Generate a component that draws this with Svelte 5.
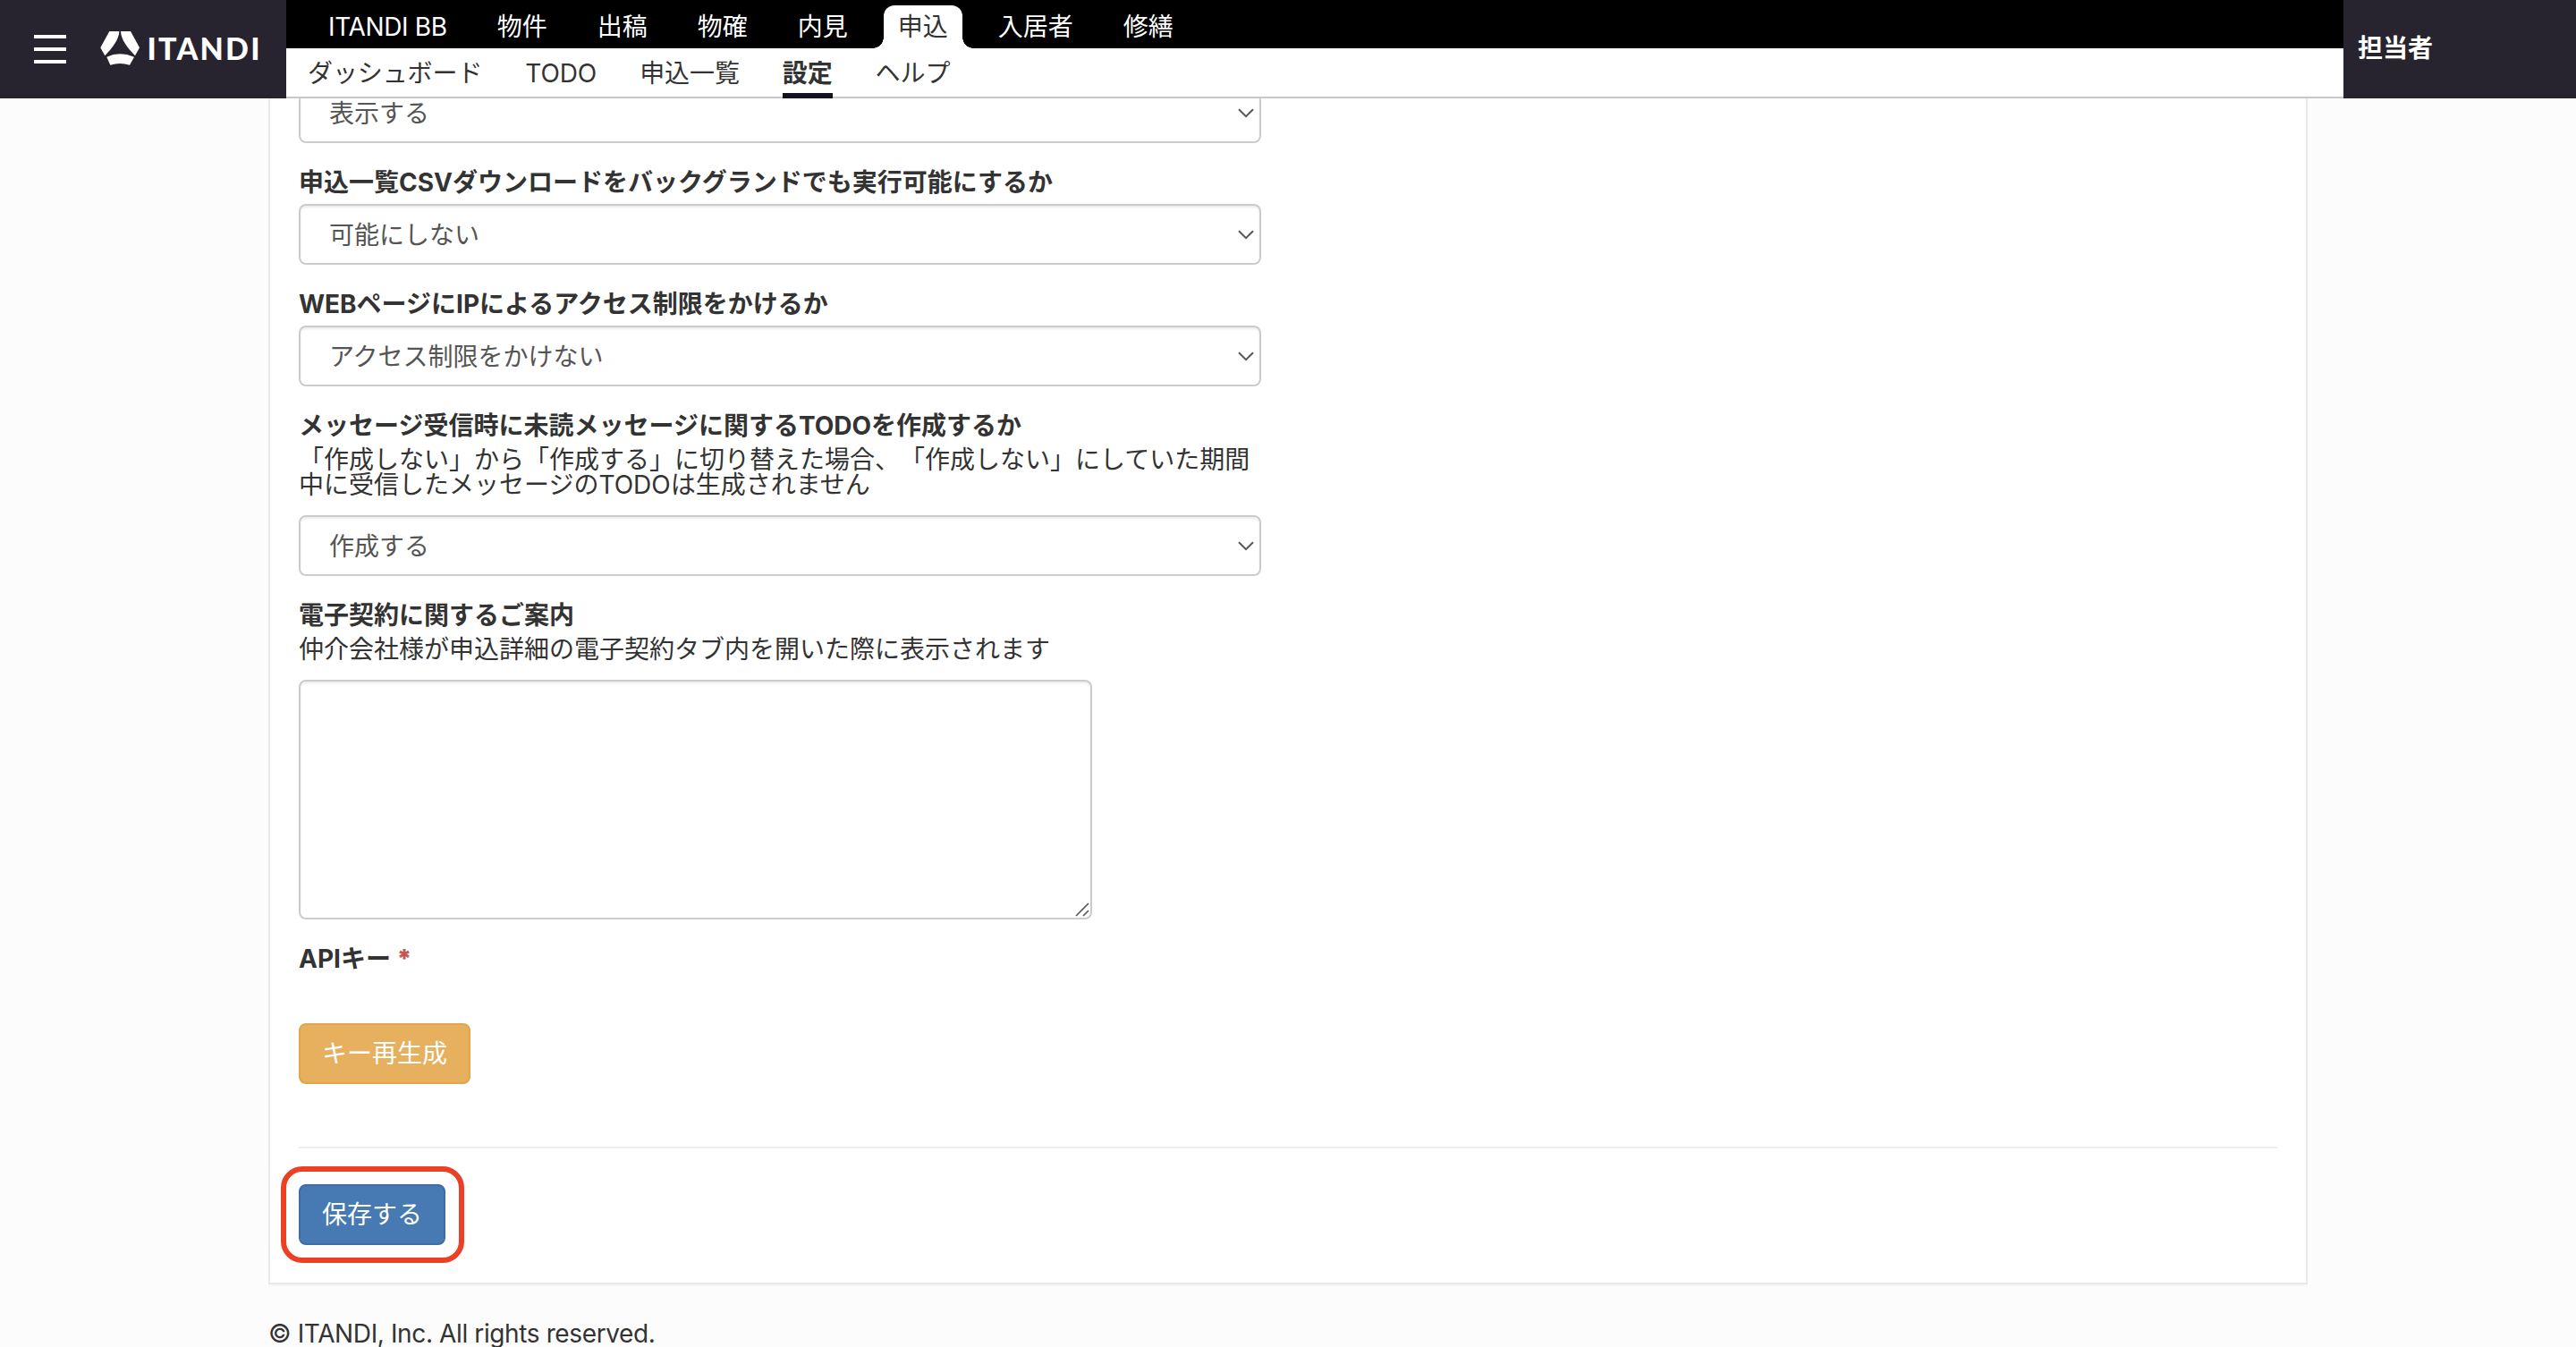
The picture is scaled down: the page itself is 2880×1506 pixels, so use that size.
<script lang="ts">
  type Field = { label: string, help?: string, value: string }

  const services = ['ITANDI BB', '物件', '出稿', '物確', '内見', '申込', '入居者', '修繕']
  const pages = ['ダッシュボード', 'TODO', '申込一覧', '設定', 'ヘルプ']
  const fields: Field[] = [
    { label: '', value: '表示する' },
    { label: '申込一覧CSVダウンロードをバックグランドでも実行可能にするか', value: '可能にしない' },
    { label: 'WEBページにIPによるアクセス制限をかけるか', value: 'アクセス制限をかけない' },
    {
      label: 'メッセージ受信時に未読メッセージに関するTODOを作成するか',
      help: '「作成しない」から「作成する」に切り替えた場合、「作成しない」にしていた期間中に受信したメッセージのTODOは生成されません',
      value: '作成する',
    },
  ]

  let service = $state('申込')
  let page = $state('設定')
</script>

<div class="app">
  <header>
    <div class="brand">
      <button class="menu" aria-label="メニュー"><i></i><i></i><i></i></button>
      <svg class="logo" width="180" height="40" viewBox="0 0 180 40">
        <path d="M10.3 0H21.3C21 9 14 18 5.3 27.3L0.3 18.3Z" />
        <path d="M23 0H34L44 18.3L39 27.3C30 18 23.3 9 23 0Z" />
        <path d="M7.3 28.7Q22 22 38 28.7L33 37.7Q22 34.5 11.3 37.7Z" />
        <text x="52.5" y="32.3" textLength="126" lengthAdjust="spacing">ITANDI</text>
      </svg>
    </div>
    <div class="navs">
      <nav class="services">
        {#each services as name}
          <button class:active={name === service} onclick={() => service = name}>{name}</button>
        {/each}
      </nav>
      <nav class="pages">
        {#each pages as name}
          <button class:active={name === page} onclick={() => page = name}>{name}</button>
        {/each}
      </nav>
    </div>
    <div class="user">担当者</div>
  </header>

  <main>
    {#each fields as field}
      <div class="group">
        {#if field.label}<h4>{field.label}</h4>{/if}
        {#if field.help}<p>{field.help}</p>{/if}
        <div class="select">
          <select aria-label={field.label}><option>{field.value}</option></select>
          <svg width="18" height="11" viewBox="0 0 18 11"><path d="M1 1.2L9 9.2L17 1.2" /></svg>
        </div>
      </div>
    {/each}

    <div class="group">
      <h4>電子契約に関するご案内</h4>
      <p>仲介会社様が申込詳細の電子契約タブ内を開いた際に表示されます</p>
      <div class="textarea">
        <textarea aria-label="電子契約に関するご案内"></textarea>
        <svg width="16" height="16" viewBox="0 0 16 16"><path d="M1 15L15 1M9 15L15 9" /></svg>
      </div>
    </div>

    <div class="group api">
      <h4>APIキー <abbr>*</abbr></h4>
      <button class="btn warning">キー再生成</button>
    </div>

    <hr>
    <div class="save">
      <button class="btn primary">保存する</button>
    </div>
  </main>

  <footer>© ITANDI, Inc. All rights reserved.</footer>
</div>

<style>
  :global(body) {
    margin: 0;
    overflow: hidden;
  }
  .app {
    height: 1506px;
    overflow: hidden;
    background: #fcfcfc;
    color: #333;
    font: 28px/32px Inter, "Noto Sans CJK JP", sans-serif;
    text-spacing-trim: space-all;
  }
  .app * {
    box-sizing: border-box;
  }
  button, select, textarea {
    margin: 0;
    padding: 0;
    border: 0;
    background: none;
    color: inherit;
    font: inherit;
  }
  header {
    position: relative;
    z-index: 1;
    display: flex;
    height: 110px;
  }
  .brand {
    display: flex;
    align-items: center;
    gap: 38px;
    width: 320px;
    padding-left: 38px;
    background: #28242f;
  }
  .menu {
    display: flex;
    flex-direction: column;
    gap: 10px;
    width: 36px;
  }
  .menu i {
    height: 4px;
    background: #fff;
  }
  .logo {
    fill: #fff;
  }
  .logo text {
    font: 900 34px Lato, sans-serif;
  }
  .navs {
    flex: 1;
    background: #fff;
    border-bottom: 2px solid #c8c7cf;
  }
  .services {
    display: flex;
    gap: 24px;
    height: 54px;
    padding: 6px 0 0 31px;
    background: #000;
    color: #fff;
  }
  .services button {
    position: relative;
    padding: 0 16px;
  }
  .services button:first-child {
    letter-spacing: -.35px;
  }
  .services .active {
    border-radius: 12px 12px 0 0;
    background: #fff;
    color: #333;
  }
  .services .active::before, .services .active::after {
    content: '';
    position: absolute;
    bottom: 0;
    width: 12px;
    height: 12px;
  }
  .services .active::before {
    right: 100%;
    background: radial-gradient(circle at 0 0, transparent 11.5px, #fff 12px);
  }
  .services .active::after {
    left: 100%;
    background: radial-gradient(circle at 100% 0, transparent 11.5px, #fff 12px);
  }
  .pages {
    display: flex;
    gap: 48px;
    height: 56px;
    padding-left: 24px;
  }
  .pages button {
    padding-top: 6px;
    border-bottom: 6px solid transparent;
    letter-spacing: -.1px;
  }
  .pages .active {
    border-color: #14121f;
    font-weight: 700;
  }
  .user {
    width: 260px;
    padding-left: 16px;
    background: #28242f;
    color: #fff;
    font-weight: 700;
    line-height: 108px;
  }
  main {
    margin: -18px 300px 0;
    padding: 0 32px 42px;
    border: solid #e8e8ee;
    border-width: 0 2px 2px;
    background: #fff;
    box-shadow: 0 2px 2px rgba(0, 0, 0, .03);
  }
  .group {
    width: 1076px;
    margin-bottom: 28px;
  }
  h4 {
    margin: 0 0 8px;
    font-size: 28px;
    font-weight: 700;
    white-space: nowrap;
  }
  p {
    margin: 0 0 20px;
    line-height: 28px;
  }
  .select, .textarea {
    position: relative;
    display: flex;
  }
  select, textarea {
    border: 2px solid #ccc;
    border-radius: 8px;
    background: #fff;
    box-shadow: inset 0 2px 2px rgba(0, 0, 0, .075);
    color: #555;
    appearance: none;
  }
  select {
    width: 100%;
    height: 68px;
    padding: 2px 32px 0;
  }
  textarea {
    width: 887px;
    height: 268px;
    resize: none;
  }
  .select svg, .textarea svg {
    position: absolute;
    fill: none;
    stroke: #555;
    stroke-width: 2;
    pointer-events: none;
  }
  .select svg {
    top: 29px;
    right: 8px;
  }
  .textarea svg {
    left: 868px;
    top: 249px;
    stroke-width: 1.6;
  }
  .api {
    margin-bottom: 70px;
  }
  .api h4 {
    margin-bottom: 56px;
  }
  abbr {
    color: #c9534f;
    font-weight: 900;
  }
  .btn {
    display: block;
    height: 68px;
    padding: 0 24px;
    border: 2px solid;
    border-radius: 8px;
    color: #fff;
  }
  .warning {
    border-color: #e2a54b;
    background: #e6b05f;
  }
  .primary {
    border-color: #3f6ca3;
    background: #477ab3;
  }
  hr {
    height: 2px;
    margin: 0 0 40px;
    border: 0;
    background: #eee;
  }
  .save {
    position: relative;
    width: fit-content;
  }
  .save::after {
    content: '';
    position: absolute;
    inset: -20px -21px -20px -20px;
    border: 6px solid #ec4024;
    border-radius: 24px;
    pointer-events: none;
  }
  footer {
    padding: 39px 300px 0;
    letter-spacing: -.38px;
  }
</style>
